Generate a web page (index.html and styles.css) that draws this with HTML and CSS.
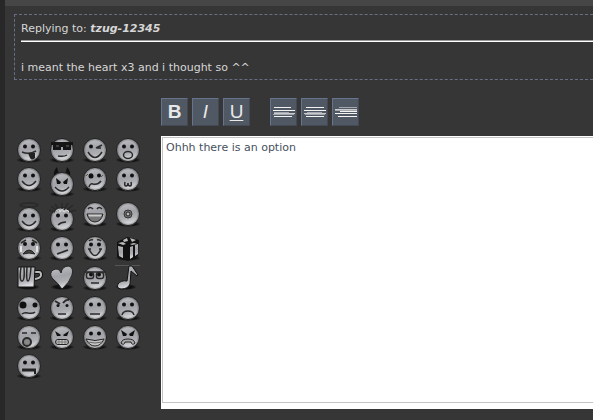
FILE: index.html
```html
<!DOCTYPE html>
<html lang="en">
<head>
    <meta charset="UTF-8">
    <meta name="viewport" content="width=device-width, initial-scale=1.0">
    <title>Reply</title>
    <link rel="stylesheet" href="styles.css">
</head>
<body>
    <!-- Shared smiley parts -->
    <svg class="defs" width="0" height="0" aria-hidden="true">
        <defs>
            <linearGradient id="metal" x1="0" y1="0" x2="0.2" y2="1">
                <stop offset="0" stop-color="#c4c5c9"/>
                <stop offset="0.5" stop-color="#a0a2a7"/>
                <stop offset="0.75" stop-color="#aeb0b4"/>
                <stop offset="1" stop-color="#dcdde0"/>
            </linearGradient>
            <radialGradient id="rim">
                <stop offset="0.75" stop-color="#222" stop-opacity="0"/>
                <stop offset="1" stop-color="#222" stop-opacity="0.6"/>
            </radialGradient>
            <radialGradient id="shade">
                <stop offset="0.6" stop-color="#000" stop-opacity="0.7"/>
                <stop offset="1" stop-color="#000" stop-opacity="0"/>
            </radialGradient>
            <g id="ball">
                <ellipse cx="13" cy="22" rx="13" ry="3" fill="url(#shade)"/>
                <circle cx="13" cy="12" r="11.6" fill="url(#metal)" stroke="#262626"/>
                <circle cx="13" cy="12" r="12" fill="url(#rim)"/>
            </g>
            <g id="face">
                <use href="#ball"/>
                <circle cx="9" cy="8.5" r="2" fill="#111"/>
                <circle cx="17" cy="8.5" r="2" fill="#111"/>
            </g>
        </defs>
    </svg>

    <div class="page">
        <div class="quote">
            <p>Replying to: <b><i>tzug-12345</i></b></p>
            <hr>
            <p>i meant the heart x3 and i thought so ^^</p>
        </div>

        <div class="reply">
            <div class="smileys">
                <button type="button" aria-label="Tongue"><svg width="26" height="26"><use href="#face"/><path class="line" d="M6 14q7 3 14-1"/><path d="M12 15h7v5q-3 3-5 0z" fill="#222"/></svg></button>
                <button type="button" aria-label="Cool"><svg width="26" height="26"><use href="#ball"/><path d="M2 4h22v3h-2v5h-8V9h-2v3H4V7H2z" fill="#151515"/><path d="M7 8h3M17 8h3" stroke="#666"/><path class="line" d="M9 18q6 1 9-1"/></svg></button>
                <button type="button" aria-label="Wink"><svg width="26" height="26"><use href="#ball"/><circle cx="9" cy="8.5" r="2" fill="#111"/><path class="line" d="M14 10l6-3M15 10h4M6 14q7 11 14 0"/></svg></button>
                <button type="button" aria-label="Shocked"><svg width="26" height="26"><use href="#face"/><ellipse cx="13" cy="17" rx="4.5" ry="3.5" class="line"/></svg></button>

                <button type="button" aria-label="Smile"><svg width="26" height="26"><use href="#face"/><path class="line" d="M6 14q7 9 14 0"/></svg></button>
                <button type="button" aria-label="Devil"><svg width="26" height="32"><path d="M5 10Q4 4 8 0q1 5 2 7zM21 10q1-6-3-10-1 5-2 7z" fill="#111"/><use href="#ball" y="5"/><path d="M7 11l5 4-1 2H8zM19 11l-5 4 1 2h3z" fill="#111"/><path class="line" d="M6 20q7 8 14 0"/></svg></button>
                <button type="button" aria-label="Confused"><svg width="26" height="26"><use href="#face"/><circle cx="9" cy="9" r="2.5" fill="#111"/><path d="M4 9l2-2M19 10l2-2" stroke="#555"/><path class="line" d="M7 20q1-4 4-3 5 1 8-3"/></svg></button>
                <button type="button" aria-label="Cat"><svg width="26" height="26"><use href="#face"/><path class="line" d="M10 15q-1 4 1 4t2-3q0 3 2 3t1-4"/></svg></button>

                <button type="button" aria-label="Angel"><svg width="26" height="31"><ellipse cx="13" cy="3" rx="9" ry="2" class="line"/><use href="#face" y="5"/><path class="line" d="M6 19q7 9 14 0"/></svg></button>
                <button type="button" aria-label="Crazy hair"><svg width="28" height="31"><use href="#face" y="5"/><path class="line" d="M6 10L0 8M8 9L2 4M10 8L6 2M13 8V1M15 8l4-7M18 8l6-5M20 10l7-2"/><path d="M7 9l3-2 1 3 2-3 2 3 3-2 2 2" stroke="#ddd" fill="none"/><path class="line" d="M9 23q3-3 8-3"/></svg></button>
                <button type="button" aria-label="Laugh"><svg width="26" height="26"><use href="#ball"/><path class="line" d="M6 7q2-3 5 0M15 7q2-3 5 0"/><path d="M5 12h16q-2 8-8 8t-8-8z" fill="#777" stroke="#222"/><path d="M6 12.5h14l-1 2H7z" fill="#ccc"/></svg></button>
                <button type="button" aria-label="Disc"><svg width="26" height="26"><use href="#ball"/><circle cx="13" cy="12" r="4" fill="#777" stroke="#333"/><circle cx="13" cy="12" r="2" fill="#bbb" stroke="#222"/></svg></button>

                <button type="button" aria-label="Crying"><svg width="26" height="26"><use href="#ball"/><path class="line" d="M5 7l5-3M16 4l5 3"/><circle cx="9" cy="8" r="2" fill="#111"/><circle cx="17" cy="8" r="2" fill="#111"/><path d="M5 10v6M21 10v6" stroke="#e4e4e6" stroke-width="2"/><path d="M7 18q6-8 12 0-6-2-12 0z" fill="#444" stroke="#222"/></svg></button>
                <button type="button" aria-label="Unsure"><svg width="26" height="26"><use href="#face"/><path class="line" d="M8 18q3-1 11-4"/></svg></button>
                <button type="button" aria-label="Grin"><svg width="26" height="26"><use href="#face"/><path class="line" d="M7 5q2-2 4-1M15 4q2-1 4 1M6 13h3M17 13h3M7 13q6 13 12 0"/></svg></button>
                <button type="button" aria-label="Gift"><svg width="26" height="26"><ellipse cx="13" cy="22" rx="13" ry="3" fill="url(#shade)"/><path d="M2 6l10-5 12 3-1 16-10 5L2 21z" fill="#111"/><path d="M3 10l5 1v11l-4-2zM15 11l3-1v11l-3 2zM20 9l3-1v10l-3 2z" fill="url(#metal)"/><path d="M8 4l4-2 1 3-4 1zM15 2l6 2-4 2zM3 7l5-1 3 2-3 1zM15 8l4-1 3 1-5 1z" fill="#bbb"/></svg></button>

                <button type="button" aria-label="Drink"><svg width="28" height="28"><ellipse cx="12" cy="22" rx="12" ry="3" fill="url(#shade)"/><path d="M18 7h5q2 0 2 3t-6 4" fill="none" stroke="#111" stroke-width="4"/><path d="M18 7h5q2 0 2 3t-6 4" fill="none" stroke="#bbb" stroke-width="2"/><path d="M2 2h17l-1 20H2z" fill="url(#metal)" stroke="#111"/><path class="line" d="M5 2q-2 14 1 14t2-14M11 2q-1 14 1 14t3-14"/></svg></button>
                <button type="button" aria-label="Heart"><svg width="26" height="26"><ellipse cx="13" cy="22" rx="12" ry="3" fill="url(#shade)"/><path d="M13 24Q9 18 3 13 0 8 4 5q6-3 8 3 1-7 8-7 5 2 3 9-2 7-10 14z" fill="url(#metal)" stroke="#222"/></svg></button>
                <button type="button" aria-label="Nerd"><svg width="26" height="26"><use href="#face" y="1"/><path d="M2 7h22" class="line"/><rect x="4.5" y="7.5" width="7" height="6" rx="2" class="line"/><rect x="14.5" y="7.5" width="7" height="6" rx="2" class="line"/><path d="M9 18h8" class="line"/></svg></button>
                <button type="button" aria-label="Music"><svg width="26" height="26"><ellipse cx="11" cy="22" rx="11" ry="3" fill="url(#shade)"/><path d="M0 .5h25" stroke="#555"/><path d="M14 1h3l6 9-1 1-6-5-1 13q-2 5-9 5-5-1-3-5 3-4 9-3z" fill="url(#metal)" stroke="#111"/></svg></button>

                <button type="button" aria-label="Dazed"><svg width="26" height="26"><use href="#ball"/><circle cx="7" cy="9" r="3.5" fill="#111"/><circle cx="19" cy="9" r="2.5" fill="#111"/><path class="line" d="M6 18q2-2 6-1 5 1 7-1"/></svg></button>
                <button type="button" aria-label="Suspicious"><svg width="26" height="26"><use href="#ball"/><path class="line bold" d="M6 5l5 3M14 7q3-4 6-3"/><circle cx="9" cy="9.5" r="1.5" fill="#111"/><circle cx="18" cy="9.5" r="1.5" fill="#111"/><path class="line" d="M9 18h8"/></svg></button>
                <button type="button" aria-label="Neutral"><svg width="26" height="26"><use href="#face"/><path class="line" d="M8 18h10"/></svg></button>
                <button type="button" aria-label="Sad"><svg width="26" height="26"><use href="#face"/><path class="line" d="M7 19q1-4 6-4t6 4"/></svg></button>

                <button type="button" aria-label="Yawn"><svg width="26" height="26"><use href="#ball"/><path class="line" d="M6 8h5M15 8h5"/><circle cx="11" cy="17" r="4" fill="#888" stroke="#2a2a2a" stroke-width="2"/></svg></button>
                <button type="button" aria-label="Furious"><svg width="26" height="26"><use href="#ball"/><path d="M6 6l6 4-1 1H8zM20 6l-6 4 1 1h3z" fill="#111"/><rect x="6.5" y="14.5" width="13" height="5" rx="2.5" fill="#ccc" stroke="#222"/><path d="M7 17h12M10 15v4M13 15v4M16 15v4" stroke="#777"/></svg></button>
                <button type="button" aria-label="Big grin"><svg width="26" height="26"><use href="#face"/><path d="M4 14q9 3 18 0-3 7-9 7t-9-7z" fill="#c4c4c6" stroke="#222"/><path d="M6 17q7 2 14 0" fill="none" stroke="#666"/></svg></button>
                <button type="button" aria-label="Angry"><svg width="26" height="26"><use href="#ball"/><path d="M6 5l6 4-1 2H8zM20 5l-6 4 1 2h3z" fill="#111"/><path d="M6 18q1-4 7-4t7 4q-3 3-4-1h-6q-1 4-4 1z" fill="#aaa" stroke="#222"/></svg></button>

                <button type="button" aria-label="Zipped"><svg width="26" height="26"><use href="#face"/><path d="M6 16h14" stroke="#222" stroke-width="3"/><path d="M19 16v4" stroke="#222" stroke-width="2"/></svg></button>
            </div>

            <div class="editor">
                <div class="toolbar">
                    <div class="group">
                        <button type="button" aria-label="Bold"><b>B</b></button>
                        <button type="button" aria-label="Italic"><i>I</i></button>
                        <button type="button" aria-label="Underline"><u>U</u></button>
                    </div>
                    <div class="group">
                        <button type="button" aria-label="Align left"><svg width="22" height="12"><path d="M1 1.5h17M0 4.5h22M1 10.5h18" stroke="#f4f4f4"/><path d="M1 6.5h15M0 8.5h21" stroke="#a4a8ae"/><path d="M1 7.5h21" stroke="#c8cacd"/></svg></button>
                        <button type="button" aria-label="Align center"><svg width="22" height="12"><path d="M2 1.5h18M0 4.5h22M2 10.5h18" stroke="#f4f4f4"/><path d="M3 6.5h15M1 8.5h20" stroke="#a4a8ae"/><path d="M0 7.5h22" stroke="#c8cacd"/></svg></button>
                        <button type="button" aria-label="Align right"><svg width="22" height="12"><path d="M5 5.5h17M0 7.5h22M3 10.5h19" stroke="#f4f4f4"/><path d="M4 1.5h18M0 4.5h22" stroke="#a4a8ae"/><path d="M0 3.5h22" stroke="#c8cacd"/></svg></button>
                    </div>
                </div>
                <div class="field">
                    <textarea aria-label="Message">Ohhh there is an option</textarea>
                </div>
            </div>
        </div>
    </div>
</body>
</html>
```
FILE: styles.css
```css
* {
    box-sizing: border-box;
}

body {
    margin: 0;
    background-color: #363636;
    color: #d6d6d6;
    font-family: Verdana, "DejaVu Sans", sans-serif;
    font-size: 11px;
    line-height: 16px;
}

.defs {
    position: absolute;
}

.page {
    min-height: 100vh;
    border-left: 5px solid #282828;
    background: linear-gradient(#464646, #464646) top / 100% 6px no-repeat;
    padding: 14px 0 0 9px;
}

.quote {
    border: 1px dashed #677083;
    border-right: none;
    padding: 6px 0 3px 6px;
}

.quote p {
    margin: 0;
}

.quote hr {
    height: 2px;
    margin: 3px 0 18px;
    border: none;
    border-top: 1px solid #9a9a9a;
    background-color: #fff;
}

.reply {
    display: flex;
    align-items: flex-start;
    gap: 20px;
    padding: 18px 0 0 2px;
}

.smileys {
    display: grid;
    grid-template-columns: repeat(4, 26px);
    gap: 3px 7px;
    align-items: start;
    padding-top: 40px;
}

.smileys button {
    display: block;
    padding: 0;
    border: none;
    background: none;
    cursor: pointer;
}

.smileys svg {
    display: block;
}

.line {
    fill: none;
    stroke: #2a2a2a;
    stroke-width: 1.5;
}

.bold {
    stroke-width: 2;
}

.editor {
    flex: 1;
}

.toolbar {
    display: flex;
    gap: 20px;
    margin-bottom: 10px;
}

.group {
    display: flex;
    gap: 4px;
}

.toolbar button {
    display: flex;
    align-items: center;
    justify-content: center;
    width: 27px;
    height: 28px;
    padding: 0;
    border: 1px solid #424955;
    border-top-color: #66738c;
    border-left-color: #66738c;
    background-color: #505864;
    color: #e8e8e8;
    font-family: "Liberation Sans", Arial, sans-serif;
    font-size: 19px;
    line-height: 20px;
    cursor: pointer;
}

.toolbar u {
    text-underline-offset: 2px;
}

.field {
    background-color: #fff;
    padding: 1px 0 6px 1px;
}

.field textarea {
    display: block;
    width: 100%;
    height: 266px;
    margin: 0;
    padding: 2px 3px;
    border: 1px solid #c4c4c4;
    border-right: none;
    outline: none;
    resize: none;
    background-color: #fff;
    color: #46505c;
    font: inherit;
}
```
